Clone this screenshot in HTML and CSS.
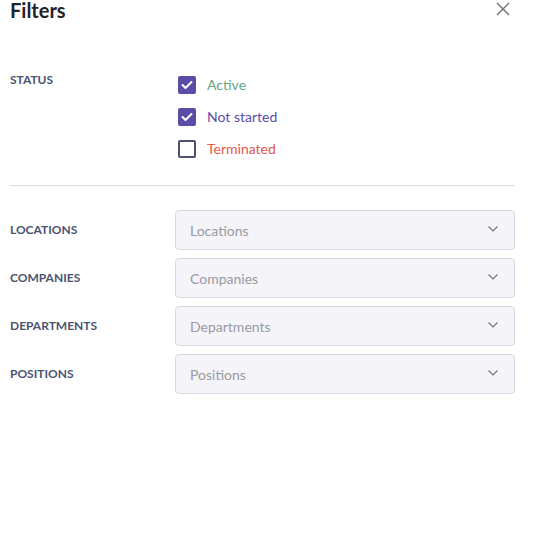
FILE: index.html
```html
<!DOCTYPE html>
<html>
<head>
<meta charset="utf-8">
<link rel="stylesheet" href="styles.css">
</head>
<body>
<div class="panel">
  <div class="header">
    <h1 class="title">Filters</h1>
    <button class="close" aria-label="Close">
      <svg width="14" height="14" viewBox="0 0 14 14"><path d="M1 1 L13 13 M13 1 L1 13" stroke="#777" stroke-width="1.5" fill="none"/></svg>
    </button>
  </div>

  <div class="status-row">
    <div class="label status-label">STATUS</div>
    <div class="checks">
      <label class="check">
        <span class="box checked"><svg width="12" height="10" viewBox="0 0 12 10"><path d="M1.5 5 L4.5 8 L10.5 2" stroke="#fff" stroke-width="2" fill="none" stroke-linecap="round" stroke-linejoin="round"/></svg></span>
        <span class="check-text active">Active</span>
      </label>
      <label class="check">
        <span class="box checked"><svg width="12" height="10" viewBox="0 0 12 10"><path d="M1.5 5 L4.5 8 L10.5 2" stroke="#fff" stroke-width="2" fill="none" stroke-linecap="round" stroke-linejoin="round"/></svg></span>
        <span class="check-text not-started">Not started</span>
      </label>
      <label class="check">
        <span class="box"></span>
        <span class="check-text terminated">Terminated</span>
      </label>
    </div>
  </div>

  <div class="divider"></div>

  <div class="selects">
    <div class="field">
      <div class="label">LOCATIONS</div>
      <div class="select"><span class="placeholder">Locations</span><svg class="chev" width="10" height="6" viewBox="0 0 10 6"><path d="M0.5 0.5 L5 5 L9.5 0.5" stroke="#777" stroke-width="1.2" fill="none"/></svg></div>
    </div>
    <div class="field">
      <div class="label">COMPANIES</div>
      <div class="select"><span class="placeholder">Companies</span><svg class="chev" width="10" height="6" viewBox="0 0 10 6"><path d="M0.5 0.5 L5 5 L9.5 0.5" stroke="#777" stroke-width="1.2" fill="none"/></svg></div>
    </div>
    <div class="field">
      <div class="label">DEPARTMENTS</div>
      <div class="select"><span class="placeholder">Departments</span><svg class="chev" width="10" height="6" viewBox="0 0 10 6"><path d="M0.5 0.5 L5 5 L9.5 0.5" stroke="#777" stroke-width="1.2" fill="none"/></svg></div>
    </div>
    <div class="field">
      <div class="label">POSITIONS</div>
      <div class="select"><span class="placeholder">Positions</span><svg class="chev" width="10" height="6" viewBox="0 0 10 6"><path d="M0.5 0.5 L5 5 L9.5 0.5" stroke="#777" stroke-width="1.2" fill="none"/></svg></div>
    </div>
  </div>
</div>
</body>
</html>
```

FILE: styles.css
```css
* { box-sizing: border-box; }
html, body { margin: 0; padding: 0; background: #fff; }
body { font-family: Lato, "Noto Sans", sans-serif; }

.panel {
  width: 525px;
  padding: 0 10px;
}

.header {
  display: flex;
  justify-content: space-between;
  align-items: flex-start;
  height: 20px;
}
.title {
  margin: 0;
  font-size: 20px;
  line-height: 20px;
  font-weight: 700;
  color: #1f2229;
}
.close {
  margin: 2px 5px 0 0;
  padding: 0;
  border: 0;
  background: none;
  width: 14px;
  height: 14px;
  display: block;
}
.close svg { display: block; }

.status-row {
  display: flex;
  margin-top: 49px;
}
.label {
  width: 165px;
  flex: none;
  font-size: 12px;
  line-height: 14px;
  font-weight: 700;
  color: #4b5370;
}
.status-label { margin-top: 4px; }

.checks { display: flex; flex-direction: column; }
.check {
  display: flex;
  align-items: center;
  height: 32px;
  padding-left: 3px;
}
.box {
  width: 18px;
  height: 18px;
  border: 2px solid #4b5370;
  border-radius: 2px;
  display: flex;
  align-items: center;
  justify-content: center;
  background: #fff;
}
.box.checked {
  background: #5b4ca8;
  border-color: #5b4ca8;
}
.box svg { display: block; }
.check-text {
  margin-left: 11px;
  font-size: 14px;
  line-height: 16px;
}
.active { color: #5ea67e; }
.not-started { color: #5b4ca8; }
.terminated { color: #e2574e; }

.divider {
  margin-top: 20px;
  height: 1px;
  width: 505px;
  background: #dcdcdc;
}

.selects {
  margin-top: 24px;
  display: flex;
  flex-direction: column;
  gap: 8px;
}
.field {
  display: flex;
  align-items: center;
}
.select {
  width: 340px;
  height: 40px;
  border: 1px solid #d9d8e2;
  border-radius: 4px;
  background: #f5f4f9;
  display: flex;
  align-items: center;
  justify-content: space-between;
  padding: 0 16px 0 14px;
}
.placeholder {
  font-size: 14px;
  color: #9a9aa2;
  margin-top: 1px;
}
.chev { display: block; margin-top: -3px; }
```
